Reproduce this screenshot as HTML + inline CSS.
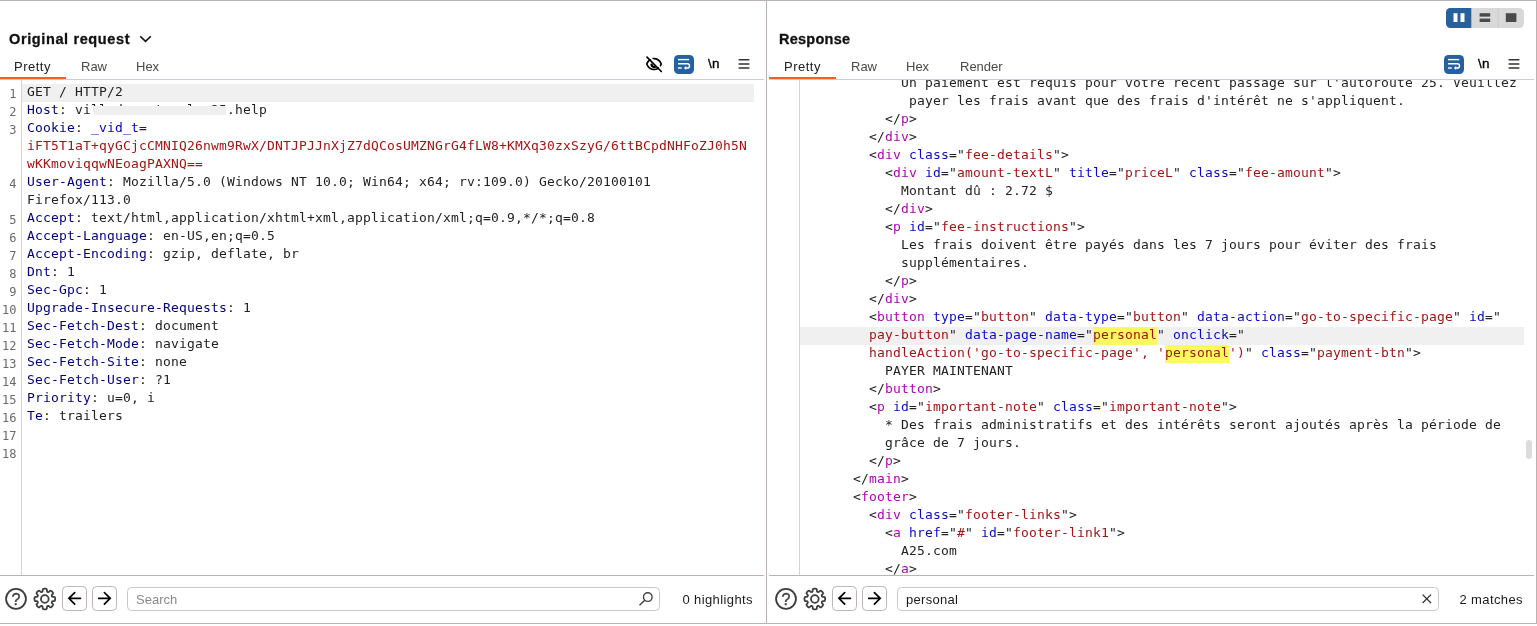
<!DOCTYPE html>
<html lang="fr"><head><meta charset="utf-8"><title>Original request / Response</title>
<style>
html,body{margin:0;padding:0;background:#fff}
body{width:1537px;height:626px;position:relative;overflow:hidden;font-family:"Liberation Sans",sans-serif;color:#222}
#root{position:absolute;left:0;top:0;width:1537px;height:626px;will-change:transform}
.abs{position:absolute}
.ln{position:absolute;white-space:pre;font-family:"DejaVu Sans Mono","Liberation Mono",monospace;font-size:13px;letter-spacing:0.1733px;line-height:18px;height:18px;color:#222;margin-top:-1px}
.num{position:absolute;left:0;width:16.5px;text-align:right;font-family:"DejaVu Sans Mono","Liberation Mono",monospace;font-size:12px;line-height:18px;height:18px;color:#6a6a6a;margin-top:1px}
.hl{position:absolute;height:18px;background:#f0f0f0}
.h{color:#00007f} .n{color:#0000c8} .v{color:#a31414} .t{color:#b000b8} .a{color:#0a0ac4}
.mk{position:absolute;width:64px;height:18px}
.title{position:absolute;top:29px;font-weight:bold;font-size:14.5px;line-height:20px;color:#111;white-space:nowrap;-webkit-text-stroke:0.3px #111}
.tab{position:absolute;top:58px;font-size:13px;line-height:18px;color:#4a4a4a;white-space:nowrap}
.act{color:#222}
.nl{font-size:13.5px;line-height:18px;color:#000;letter-spacing:0.3px;-webkit-text-stroke:0.35px #000}
.sbox{height:24px;box-sizing:border-box;border:1px solid #c8c8c8;border-radius:4.5px;background:#fff;font-size:13px;line-height:24px;padding-left:8px;white-space:nowrap}
.ph{color:#8a8a8a} .val{color:#1a1a1a;letter-spacing:0.3px}
.lbl{font-size:13px;line-height:18px;color:#1a1a1a;white-space:nowrap;letter-spacing:0.4px}
.line{position:absolute;background:#b9b3b3}
.hsep{position:absolute;height:1px;background:#c6d1d5;top:79px}
.ora{position:absolute;height:2px;top:77px;background:#ff5e22}
.gut{position:absolute;width:1px;background:#d4d4d4;top:80px;height:495px}
</style></head><body><div id="root">
<div class="line" style="left:0;top:0;width:1537px;height:1px"></div>
<div class="line" style="left:0;top:623px;width:1537px;height:1px"></div>
<div class="line" style="left:1536px;top:0;width:1px;height:624px"></div>
<div class="line" style="left:766px;top:1px;width:1px;height:622px"></div>
<div style="position:absolute;left:0;top:625px;width:1537px;height:1px;background:#fafafa"></div>

<!-- left pane -->
<div class="title" style="left:9px;letter-spacing:0.62px">Original request</div>
<svg class="abs" style="left:139px;top:35px" width="13" height="8" viewBox="0 0 13 8">
<path d="M1.200 1.200L6.500 6.400L11.800 1.200" fill="none" stroke="#111" stroke-width="1.6"/></svg>
<div class="tab act" style="left:14px;letter-spacing:0.5px">Pretty</div>
<div class="tab" style="left:81px">Raw</div>
<div class="tab" style="left:136px">Hex</div>
<svg class="abs" style="left:644px;top:55px" width="20" height="19" viewBox="0 0 20 19">
<g fill="none" stroke="#000" stroke-width="1.7" stroke-linecap="round">
<path d="M2.700 9C4.300 5.400 7 3.700 9.900 3.700c3.200 0 6 2 7.400 5.300C15.900 12.600 13.100 14.500 9.900 14.500C7 14.500 4.300 12.700 2.700 9z"/>
<path d="M7.600 9.600a2.400 2.400 0 0 0 3.300 2.200" stroke-width="2.4"/>
</g>
<path d="M4.800 1.200L19.300 15.700" stroke="#fff" stroke-width="1.900" fill="none"/>
<path d="M3 2.200L17.300 16.500" stroke="#000" stroke-width="1.7" stroke-linecap="round" fill="none"/>
</svg>
<svg class="abs" style="left:674px;top:55px" width="20" height="19" viewBox="0 0 20 19">
<rect x="0" y="0" width="20" height="19" rx="4.5" fill="#26609d"/>
<g fill="none" stroke="#fff" stroke-width="1.4" stroke-linecap="butt">
<path d="M4 4.6H15.2"/>
<path d="M4 8.8H13.4a2.1 2.1 0 0 1 0 4.2H11.4"/>
<path d="M4 13H7.8"/>
</g>
<path d="M12.2 11L9.8 13l2.4 2z" fill="#fff"/>
</svg>
<div class="abs nl" style="left:708px;top:55px">\n</div>
<svg class="abs" style="left:738px;top:58px" width="12" height="12" viewBox="0 0 12 12">
<g stroke="#333" stroke-width="1.5"><path d="M0.6 1.8H11.4M0.6 5.9H11.4M0.6 10H11.4"/></g></svg>
<div class="hsep" style="left:0;width:764px"></div>
<div class="ora" style="left:0;width:66px"></div>
<div class="gut" style="left:21px"></div>
<div class="num" style="top:84px">1</div>
<div class="hl" style="left:22px;top:84px;width:732px"></div>
<div class="ln" style="left:27px;top:84px">GET / HTTP/2</div>
<div class="num" style="top:102px">2</div>
<div class="ln" style="left:27px;top:102px"><span class="h">Host</span>: villxdxxxxtxxxlxx25.help</div>
<div class="num" style="top:120px">3</div>
<div class="ln" style="left:27px;top:120px"><span class="h">Cookie</span>: <span class="n">_vid_t</span>=</div>
<div class="ln" style="left:27px;top:138px"><span class="v">iFT5T1aT+qyGCjcCMNIQ26nwm9RwX/DNTJPJJnXjZ7dQCosUMZNGrG4fLW8+KMXq30zxSzyG/6ttBCpdNHFoZJ0h5N</span></div>
<div class="ln" style="left:27px;top:156px"><span class="v">wKKmoviqqwNEoagPAXNQ==</span></div>
<div class="num" style="top:174px">4</div>
<div class="ln" style="left:27px;top:174px"><span class="h">User-Agent</span>: Mozilla/5.0 (Windows NT 10.0; Win64; x64; rv:109.0) Gecko/20100101</div>
<div class="ln" style="left:27px;top:192px">Firefox/113.0</div>
<div class="num" style="top:210px">5</div>
<div class="ln" style="left:27px;top:210px"><span class="h">Accept</span>: text/html,application/xhtml+xml,application/xml;q=0.9,*/*;q=0.8</div>
<div class="num" style="top:228px">6</div>
<div class="ln" style="left:27px;top:228px"><span class="h">Accept-Language</span>: en-US,en;q=0.5</div>
<div class="num" style="top:246px">7</div>
<div class="ln" style="left:27px;top:246px"><span class="h">Accept-Encoding</span>: gzip, deflate, br</div>
<div class="num" style="top:264px">8</div>
<div class="ln" style="left:27px;top:264px"><span class="h">Dnt</span>: 1</div>
<div class="num" style="top:282px">9</div>
<div class="ln" style="left:27px;top:282px"><span class="h">Sec-Gpc</span>: 1</div>
<div class="num" style="top:300px">10</div>
<div class="ln" style="left:27px;top:300px"><span class="h">Upgrade-Insecure-Requests</span>: 1</div>
<div class="num" style="top:318px">11</div>
<div class="ln" style="left:27px;top:318px"><span class="h">Sec-Fetch-Dest</span>: document</div>
<div class="num" style="top:336px">12</div>
<div class="ln" style="left:27px;top:336px"><span class="h">Sec-Fetch-Mode</span>: navigate</div>
<div class="num" style="top:354px">13</div>
<div class="ln" style="left:27px;top:354px"><span class="h">Sec-Fetch-Site</span>: none</div>
<div class="num" style="top:372px">14</div>
<div class="ln" style="left:27px;top:372px"><span class="h">Sec-Fetch-User</span>: ?1</div>
<div class="num" style="top:390px">15</div>
<div class="ln" style="left:27px;top:390px"><span class="h">Priority</span>: u=0, i</div>
<div class="num" style="top:408px">16</div>
<div class="ln" style="left:27px;top:408px"><span class="h">Te</span>: trailers</div>
<div class="num" style="top:426px">17</div>
<div class="num" style="top:444px">18</div>
<div style="position:absolute;left:94px;top:106px;width:132px;height:9px;background:#efefef"></div>
<div class="line" style="left:0;top:575px;width:764px;height:1px"></div>
<svg class="abs" style="left:4px;top:587px" width="24" height="24" viewBox="0 0 24 24">
<circle cx="12" cy="11.85" r="9.95" fill="none" stroke="#3d3d3d" stroke-width="1.8"/>
<text x="12" y="17.7" text-anchor="middle" font-family="Liberation Sans, sans-serif" font-size="16" fill="#3d3d3d" stroke="#3d3d3d" stroke-width="0.35">?</text>
</svg>
<svg class="abs" style="left:33px;top:587px" width="24" height="24" viewBox="0 0 24 24">
<path d="M9.16 4.81Q9.68 4.60 9.72 3.67L9.76 2.62Q9.80 1.69 11.08 1.69L12.52 1.69Q13.80 1.69 13.84 2.62L13.88 3.67Q13.92 4.60 14.44 4.81L15.02 5.05Q15.53 5.27 16.22 4.63L16.99 3.93Q17.67 3.30 18.58 4.20L19.60 5.22Q20.50 6.13 19.87 6.81L19.17 7.58Q18.53 8.27 18.75 8.78L18.99 9.36Q19.20 9.88 20.13 9.92L21.18 9.96Q22.11 10.00 22.11 11.28L22.11 12.72Q22.11 14.00 21.18 14.04L20.13 14.08Q19.20 14.12 18.99 14.64L18.75 15.22Q18.53 15.73 19.17 16.42L19.87 17.19Q20.50 17.87 19.60 18.78L18.58 19.80Q17.67 20.70 16.99 20.07L16.22 19.37Q15.53 18.73 15.02 18.95L14.44 19.19Q13.92 19.40 13.88 20.33L13.84 21.38Q13.80 22.31 12.52 22.31L11.08 22.31Q9.80 22.31 9.76 21.38L9.72 20.33Q9.68 19.40 9.16 19.19L8.58 18.95Q8.07 18.73 7.38 19.37L6.61 20.07Q5.93 20.70 5.02 19.80L4.00 18.78Q3.10 17.87 3.73 17.19L4.43 16.42Q5.07 15.73 4.85 15.22L4.61 14.64Q4.40 14.12 3.47 14.08L2.42 14.04Q1.49 14.00 1.49 12.72L1.49 11.28Q1.49 10.00 2.42 9.96L3.47 9.92Q4.40 9.88 4.61 9.36L4.85 8.78Q5.07 8.27 4.43 7.58L3.73 6.81Q3.10 6.13 4.00 5.22L5.02 4.20Q5.93 3.30 6.61 3.93L7.38 4.63Q8.07 5.27 8.58 5.05Z" fill="none" stroke="#3d3d3d" stroke-width="1.8" stroke-linejoin="round"/>
<circle cx="11.8" cy="12" r="3.85" fill="none" stroke="#3d3d3d" stroke-width="1.8"/>
</svg>
<svg class="abs" style="left:62px;top:586px" width="25" height="25" viewBox="0 0 25 25">
<rect x="0.5" y="0.5" width="24" height="24" rx="4" fill="#fff" stroke="#bdb6b6"/>
<path d="M18.4 12.35H7M12.7 6.6L6.9 12.35l5.8 5.75" fill="none" stroke="#000" stroke-width="1.7" stroke-linecap="round" stroke-linejoin="miter"/>
</svg>
<svg class="abs" style="left:92px;top:586px" width="25" height="25" viewBox="0 0 25 25">
<rect x="0.5" y="0.5" width="24" height="24" rx="4" fill="#fff" stroke="#bdb6b6"/>
<path d="M6.7 12.35H18M12.4 6.6L18.2 12.35l-5.8 5.75" fill="none" stroke="#000" stroke-width="1.7" stroke-linecap="round" stroke-linejoin="miter"/>
</svg>
<div class="abs sbox" style="left:127px;top:587px;width:533px"><span class="ph">Search</span></div>
<svg class="abs" style="left:638px;top:590px" width="17" height="17" viewBox="0 0 17 17">
<circle cx="9.8" cy="7.1" r="4.3" fill="none" stroke="#444" stroke-width="1.4"/>
<path d="M6.700 10.200L1.500 15.300" stroke="#444" stroke-width="1.5" fill="none"/></svg>
<div class="abs lbl" style="right:784px;top:591px">0 highlights</div>

<!-- right pane -->
<div class="title" style="left:779px;letter-spacing:0.25px">Response</div>
<div class="tab act" style="left:784px;letter-spacing:0.5px">Pretty</div>
<div class="tab" style="left:851px">Raw</div>
<div class="tab" style="left:906px">Hex</div>
<div class="tab" style="left:960px">Render</div>
<svg class="abs" style="left:1446px;top:8px" width="78" height="20" viewBox="0 0 78 20">
<rect x="0" y="0" width="78" height="20" rx="4.5" fill="#d9d9d9"/>
<path d="M4.500 0H25.300V20H4.500A4.500 4.500 0 0 1 0 15.500V4.500A4.500 4.500 0 0 1 4.500 0z" fill="#26609d"/>
<rect x="51.500" y="0" width="1" height="20" fill="#cccccc"/>
<rect x="7.500" y="5.200" width="4" height="8.800" fill="#fff"/><rect x="14.500" y="5.200" width="4" height="8.800" fill="#fff"/>
<rect x="33.600" y="5.200" width="10.600" height="3.400" fill="#4a4a4a"/><rect x="33.600" y="10.600" width="10.600" height="3.400" fill="#4a4a4a"/>
<rect x="59.800" y="5.200" width="10.600" height="8.800" fill="#4a4a4a"/>
</svg>
<svg class="abs" style="left:1444px;top:55px" width="20" height="19" viewBox="0 0 20 19">
<rect x="0" y="0" width="20" height="19" rx="4.5" fill="#26609d"/>
<g fill="none" stroke="#fff" stroke-width="1.4" stroke-linecap="butt">
<path d="M4 4.6H15.2"/>
<path d="M4 8.8H13.4a2.1 2.1 0 0 1 0 4.2H11.4"/>
<path d="M4 13H7.8"/>
</g>
<path d="M12.2 11L9.8 13l2.4 2z" fill="#fff"/>
</svg>
<div class="abs nl" style="left:1478px;top:55px">\n</div>
<svg class="abs" style="left:1508px;top:58px" width="12" height="12" viewBox="0 0 12 12">
<g stroke="#333" stroke-width="1.5"><path d="M0.6 1.8H11.4M0.6 5.9H11.4M0.6 10H11.4"/></g></svg>
<div class="hsep" style="left:769px;width:765px"></div>
<div class="ora" style="left:769px;width:67px"></div>
<div class="gut" style="left:799px"></div>
<div style="position:absolute;left:769px;top:80px;width:766px;height:495px;overflow:hidden">
<div class="ln" style="left:132px;top:-5px">Un paiement est requis pour votre récent passage sur l'autoroute 25. Veuillez</div>
<div class="ln" style="left:132px;top:13px"> payer les frais avant que des frais d'intérêt ne s'appliquent.</div>
<div class="ln" style="left:116px;top:31px">&lt;/<span class="t">p</span>&gt;</div>
<div class="ln" style="left:100px;top:49px">&lt;/<span class="t">div</span>&gt;</div>
<div class="ln" style="left:100px;top:67px">&lt;<span class="t">div</span> <span class="a">class</span>="<span class="v">fee-details</span>"&gt;</div>
<div class="ln" style="left:116px;top:85px">&lt;<span class="t">div</span> <span class="a">id</span>="<span class="v">amount-textL</span>" <span class="a">title</span>="<span class="v">priceL</span>" <span class="a">class</span>="<span class="v">fee-amount</span>"&gt;</div>
<div class="ln" style="left:132px;top:103px">Montant dû : 2.72 $</div>
<div class="ln" style="left:116px;top:121px">&lt;/<span class="t">div</span>&gt;</div>
<div class="ln" style="left:116px;top:139px">&lt;<span class="t">p</span> <span class="a">id</span>="<span class="v">fee-instructions</span>"&gt;</div>
<div class="ln" style="left:132px;top:157px">Les frais doivent être payés dans les 7 jours pour éviter des frais</div>
<div class="ln" style="left:132px;top:175px">supplémentaires.</div>
<div class="ln" style="left:116px;top:193px">&lt;/<span class="t">p</span>&gt;</div>
<div class="ln" style="left:100px;top:211px">&lt;/<span class="t">div</span>&gt;</div>
<div class="ln" style="left:100px;top:229px">&lt;<span class="t">button</span> <span class="a">type</span>="<span class="v">button</span>" <span class="a">data-type</span>="<span class="v">button</span>" <span class="a">data-action</span>="<span class="v">go-to-specific-page</span>" <span class="a">id</span>="</div>
<div class="hl" style="left:31px;top:247px;width:724px"></div>
<div class="mk" style="left:324px;top:247px;background:#fcf862"></div>
<div class="ln" style="left:100px;top:247px"><span class="v">pay-button</span>" <span class="a">data-page-name</span>="<span class="v">personal</span>" <span class="a">onclick</span>="</div>
<div class="mk" style="left:396px;top:265px;background:#ffff5c"></div>
<div class="ln" style="left:100px;top:265px"><span class="v">handleAction('go-to-specific-page', '</span><span class="v">personal</span><span class="v">')</span>" <span class="a">class</span>="<span class="v">payment-btn</span>"&gt;</div>
<div class="ln" style="left:116px;top:283px">PAYER MAINTENANT</div>
<div class="ln" style="left:100px;top:301px">&lt;/<span class="t">button</span>&gt;</div>
<div class="ln" style="left:100px;top:319px">&lt;<span class="t">p</span> <span class="a">id</span>="<span class="v">important-note</span>" <span class="a">class</span>="<span class="v">important-note</span>"&gt;</div>
<div class="ln" style="left:116px;top:337px">* Des frais administratifs et des intérêts seront ajoutés après la période de</div>
<div class="ln" style="left:116px;top:355px">grâce de 7 jours.</div>
<div class="ln" style="left:100px;top:373px">&lt;/<span class="t">p</span>&gt;</div>
<div class="ln" style="left:84px;top:391px">&lt;/<span class="t">main</span>&gt;</div>
<div class="ln" style="left:84px;top:409px">&lt;<span class="t">footer</span>&gt;</div>
<div class="ln" style="left:100px;top:427px">&lt;<span class="t">div</span> <span class="a">class</span>="<span class="v">footer-links</span>"&gt;</div>
<div class="ln" style="left:116px;top:445px">&lt;<span class="t">a</span> <span class="a">href</span>="<span class="v">#</span>" <span class="a">id</span>="<span class="v">footer-link1</span>"&gt;</div>
<div class="ln" style="left:132px;top:463px">A25.com</div>
<div class="ln" style="left:116px;top:481px">&lt;/<span class="t">a</span>&gt;</div>
</div>
<div style="position:absolute;left:1526px;top:440px;width:6px;height:19px;border-radius:3px;background:#dcdcdc"></div>
<div class="line" style="left:769px;top:575px;width:765px;height:1px"></div>
<svg class="abs" style="left:774px;top:587px" width="24" height="24" viewBox="0 0 24 24">
<circle cx="12" cy="11.85" r="9.95" fill="none" stroke="#3d3d3d" stroke-width="1.8"/>
<text x="12" y="17.7" text-anchor="middle" font-family="Liberation Sans, sans-serif" font-size="16" fill="#3d3d3d" stroke="#3d3d3d" stroke-width="0.35">?</text>
</svg>
<svg class="abs" style="left:803px;top:587px" width="24" height="24" viewBox="0 0 24 24">
<path d="M9.16 4.81Q9.68 4.60 9.72 3.67L9.76 2.62Q9.80 1.69 11.08 1.69L12.52 1.69Q13.80 1.69 13.84 2.62L13.88 3.67Q13.92 4.60 14.44 4.81L15.02 5.05Q15.53 5.27 16.22 4.63L16.99 3.93Q17.67 3.30 18.58 4.20L19.60 5.22Q20.50 6.13 19.87 6.81L19.17 7.58Q18.53 8.27 18.75 8.78L18.99 9.36Q19.20 9.88 20.13 9.92L21.18 9.96Q22.11 10.00 22.11 11.28L22.11 12.72Q22.11 14.00 21.18 14.04L20.13 14.08Q19.20 14.12 18.99 14.64L18.75 15.22Q18.53 15.73 19.17 16.42L19.87 17.19Q20.50 17.87 19.60 18.78L18.58 19.80Q17.67 20.70 16.99 20.07L16.22 19.37Q15.53 18.73 15.02 18.95L14.44 19.19Q13.92 19.40 13.88 20.33L13.84 21.38Q13.80 22.31 12.52 22.31L11.08 22.31Q9.80 22.31 9.76 21.38L9.72 20.33Q9.68 19.40 9.16 19.19L8.58 18.95Q8.07 18.73 7.38 19.37L6.61 20.07Q5.93 20.70 5.02 19.80L4.00 18.78Q3.10 17.87 3.73 17.19L4.43 16.42Q5.07 15.73 4.85 15.22L4.61 14.64Q4.40 14.12 3.47 14.08L2.42 14.04Q1.49 14.00 1.49 12.72L1.49 11.28Q1.49 10.00 2.42 9.96L3.47 9.92Q4.40 9.88 4.61 9.36L4.85 8.78Q5.07 8.27 4.43 7.58L3.73 6.81Q3.10 6.13 4.00 5.22L5.02 4.20Q5.93 3.30 6.61 3.93L7.38 4.63Q8.07 5.27 8.58 5.05Z" fill="none" stroke="#3d3d3d" stroke-width="1.8" stroke-linejoin="round"/>
<circle cx="11.8" cy="12" r="3.85" fill="none" stroke="#3d3d3d" stroke-width="1.8"/>
</svg>
<svg class="abs" style="left:832px;top:586px" width="25" height="25" viewBox="0 0 25 25">
<rect x="0.5" y="0.5" width="24" height="24" rx="4" fill="#fff" stroke="#bdb6b6"/>
<path d="M18.4 12.35H7M12.7 6.6L6.9 12.35l5.8 5.75" fill="none" stroke="#000" stroke-width="1.7" stroke-linecap="round" stroke-linejoin="miter"/>
</svg>
<svg class="abs" style="left:862px;top:586px" width="25" height="25" viewBox="0 0 25 25">
<rect x="0.5" y="0.5" width="24" height="24" rx="4" fill="#fff" stroke="#bdb6b6"/>
<path d="M6.7 12.35H18M12.4 6.6L18.2 12.35l-5.8 5.75" fill="none" stroke="#000" stroke-width="1.7" stroke-linecap="round" stroke-linejoin="miter"/>
</svg>
<div class="abs sbox" style="left:897px;top:587px;width:542px"><span class="val">personal</span></div>
<svg class="abs" style="left:1421px;top:593px" width="12" height="12" viewBox="0 0 12 12">
<path d="M1.6 1.6L10 10M10 1.6L1.6 10" stroke="#333" stroke-width="1.3" fill="none"/></svg>
<div class="abs lbl" style="right:14px;top:591px">2 matches</div>
</div></body></html>
